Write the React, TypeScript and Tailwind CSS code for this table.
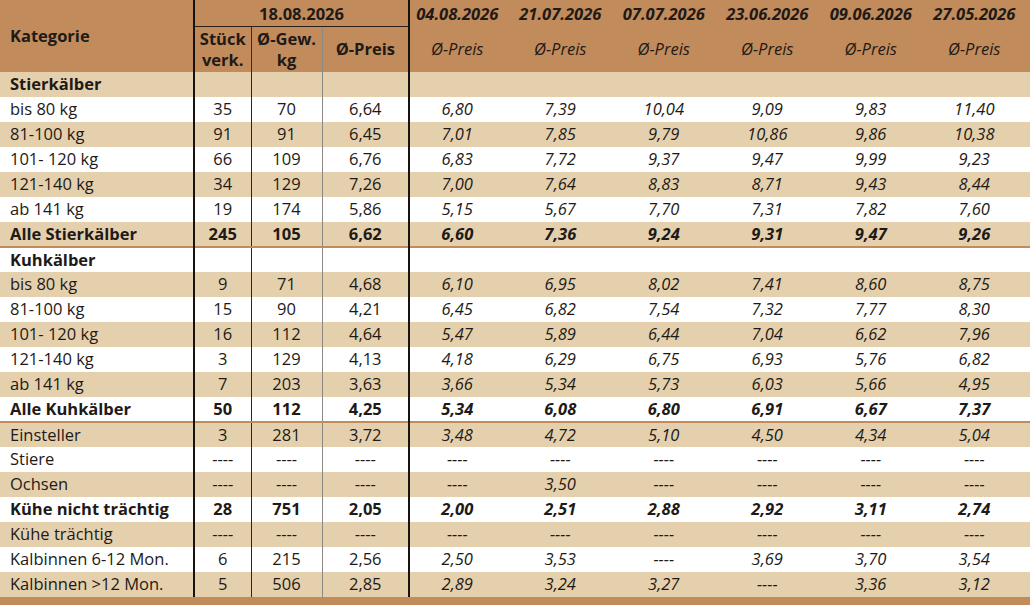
import React from "react"

type Row = {
    label: string
    vals?: string[]
    bold?: boolean
    rule?: boolean
}

const DATES = ['04.08.2026', '21.07.2026', '07.07.2026', '23.06.2026', '09.06.2026', '27.05.2026']

const D = '----'

const ROWS: Row[] = [
    { label: 'Stierkälber', bold: true },
    { label: 'bis 80 kg', vals: ['35', '70', '6,64', '6,80', '7,39', '10,04', '9,09', '9,83', '11,40'] },
    { label: '81-100 kg', vals: ['91', '91', '6,45', '7,01', '7,85', '9,79', '10,86', '9,86', '10,38'] },
    { label: '101- 120 kg', vals: ['66', '109', '6,76', '6,83', '7,72', '9,37', '9,47', '9,99', '9,23'] },
    { label: '121-140 kg', vals: ['34', '129', '7,26', '7,00', '7,64', '8,83', '8,71', '9,43', '8,44'] },
    { label: 'ab 141 kg', vals: ['19', '174', '5,86', '5,15', '5,67', '7,70', '7,31', '7,82', '7,60'] },
    { label: 'Alle Stierkälber', bold: true, rule: true, vals: ['245', '105', '6,62', '6,60', '7,36', '9,24', '9,31', '9,47', '9,26'] },
    { label: 'Kuhkälber', bold: true },
    { label: 'bis 80 kg', vals: ['9', '71', '4,68', '6,10', '6,95', '8,02', '7,41', '8,60', '8,75'] },
    { label: '81-100 kg', vals: ['15', '90', '4,21', '6,45', '6,82', '7,54', '7,32', '7,77', '8,30'] },
    { label: '101- 120 kg', vals: ['16', '112', '4,64', '5,47', '5,89', '6,44', '7,04', '6,62', '7,96'] },
    { label: '121-140 kg', vals: ['3', '129', '4,13', '4,18', '6,29', '6,75', '6,93', '5,76', '6,82'] },
    { label: 'ab 141 kg', vals: ['7', '203', '3,63', '3,66', '5,34', '5,73', '6,03', '5,66', '4,95'] },
    { label: 'Alle Kuhkälber', bold: true, rule: true, vals: ['50', '112', '4,25', '5,34', '6,08', '6,80', '6,91', '6,67', '7,37'] },
    { label: 'Einsteller', vals: ['3', '281', '3,72', '3,48', '4,72', '5,10', '4,50', '4,34', '5,04'] },
    { label: 'Stiere', vals: [D, D, D, D, D, D, D, D, D] },
    { label: 'Ochsen', vals: [D, D, D, D, '3,50', D, D, D, D] },
    { label: 'Kühe nicht trächtig', bold: true, vals: ['28', '751', '2,05', '2,00', '2,51', '2,88', '2,92', '3,11', '2,74'] },
    { label: 'Kühe trächtig', vals: [D, D, D, D, D, D, D, D, D] },
    { label: 'Kalbinnen 6-12 Mon.', vals: ['6', '215', '2,56', '2,50', '3,53', D, '3,69', '3,70', '3,54'] },
    { label: 'Kalbinnen >12 Mon.', vals: ['5', '506', '2,85', '2,89', '3,24', '3,27', D, '3,36', '3,12'] },
]

// vertical rules of the first block, per column index
const LEFT_BORDERS = [
    'border-r-2 border-r-[#161310]',
    'border-r border-r-[#2a2622]',
    'border-r border-r-[#8c8985]',
    'border-r-2 border-r-[#161310]',
]

export default function App() {
    return (
        <div className="w-[1030px] h-[605px] overflow-hidden bg-[#c28b5c] text-[#1d1a17] text-[16.5px] font-['Open_Sans','Liberation_Sans',sans-serif]">
            <table className="w-[1030px] table-fixed border-collapse">
                <colgroup>
                    <col className="w-[194px]" />
                    <col className="w-[57px]" />
                    <col className="w-[71px]" />
                    <col className="w-[87px]" />
                    {DATES.map((d) => (
                        <col key={d} className="w-[103.5px]" />
                    ))}
                </colgroup>
                <thead className="bg-[#c28b5c]">
                    <tr className="h-[26px]">
                        <th rowSpan={2} className={`text-left align-middle pl-[10px] font-bold ${LEFT_BORDERS[0]}`}>
                            Kategorie
                        </th>
                        <th colSpan={3} className={`font-bold text-center leading-none pt-[2px] border-b border-b-[#2a2018] ${LEFT_BORDERS[3]}`}>
                            18.08.2026
                        </th>
                        {DATES.map((d) => (
                            <th key={d} className="font-bold italic text-center pr-2 leading-none pt-[2px]">
                                {d}
                            </th>
                        ))}
                    </tr>
                    <tr className="h-[46px]">
                        <th className={`font-bold text-center leading-[21px] ${LEFT_BORDERS[1]} border-r-[#3a2a1d]`}>
                            Stück<br />verk.
                        </th>
                        <th className={`font-bold text-center leading-[21px] ${LEFT_BORDERS[2]} border-r-[#5b4634]`}>
                            Ø-Gew.<br />kg
                        </th>
                        <th className={`font-bold text-center ${LEFT_BORDERS[3]}`}>Ø-Preis</th>
                        {DATES.map((d) => (
                            <th key={d} className="font-normal italic text-center pr-2">
                                Ø-Preis
                            </th>
                        ))}
                    </tr>
                </thead>
                <tbody>
                    {ROWS.map((row, i) => {
                        const bg = i % 2 === 0 ? 'bg-[#e5d0ae]' : 'bg-white'
                        const rule = row.rule ? 'border-b-2 border-b-[#c28b5c]' : ''
                        const weight = row.bold ? 'font-bold' : 'font-normal'
                        return (
                            <tr key={i} className={`h-[25px] ${bg} ${rule}`}>
                                <td className={`pl-[10px] leading-none whitespace-nowrap ${weight} ${LEFT_BORDERS[0]}`}>
                                    {row.label}
                                </td>
                                {[0, 1, 2].map((c) => (
                                    <td key={c} className={`text-center leading-none ${weight} ${LEFT_BORDERS[c + 1]}`}>
                                        {row.vals ? row.vals[c] : ''}
                                    </td>
                                ))}
                                {[3, 4, 5, 6, 7, 8].map((c) => (
                                    <td key={c} className={`text-center italic pr-2 leading-none ${weight}`}>
                                        {row.vals ? row.vals[c] : ''}
                                    </td>
                                ))}
                            </tr>
                        )
                    })}
                </tbody>
            </table>
        </div>
    )
}
